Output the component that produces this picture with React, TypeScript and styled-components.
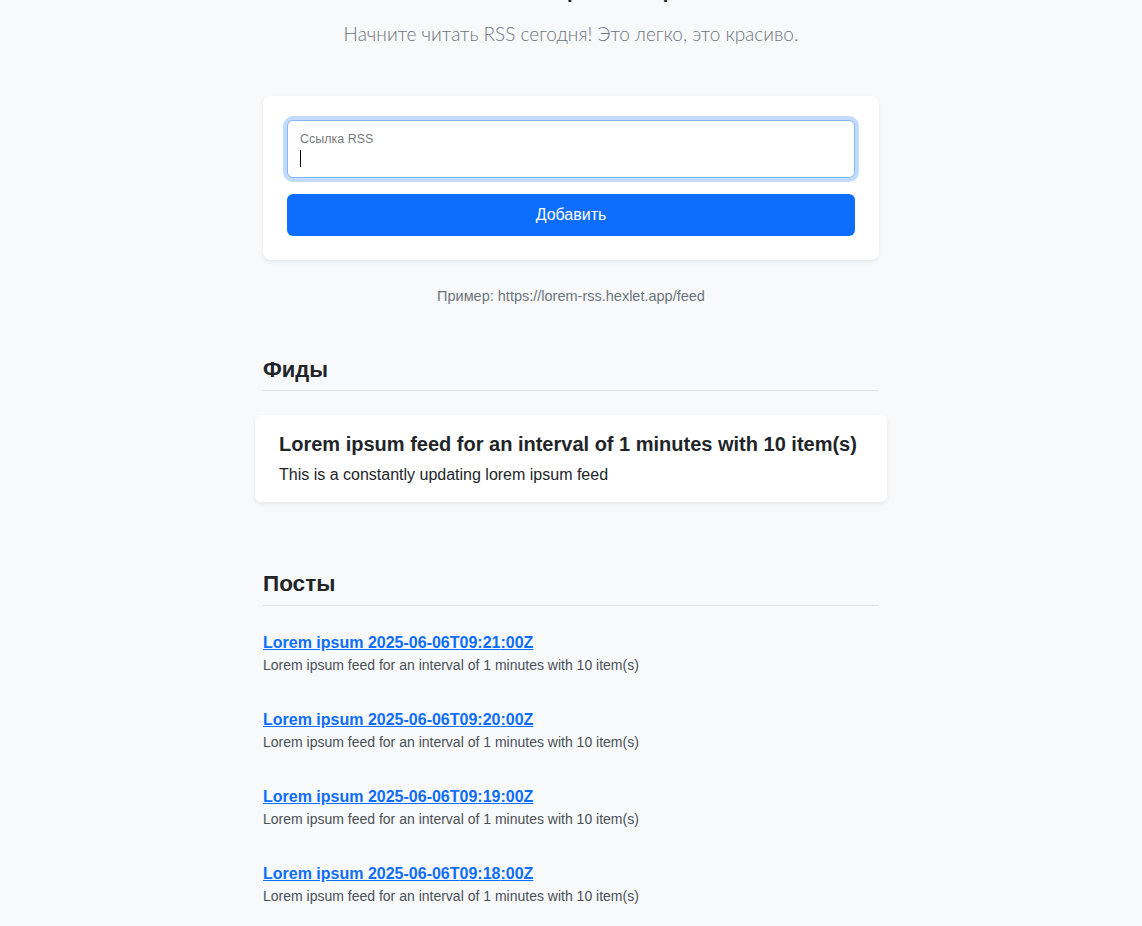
import React from "react";
import styled, { createGlobalStyle } from "styled-components";

const Global = createGlobalStyle`
  html, body { margin: 0; padding: 0; }
  body {
    background: #f8f9fa;
    color: #212529;
    font-family: "Segoe UI", "Liberation Sans", Arial, sans-serif;
    font-size: 16px;
    line-height: 1.5;
    overflow: hidden;
  }
  * { box-sizing: border-box; }
`;

const Page = styled.main`
  width: 616px;
  margin: 0 auto;
  display: flex;
  flex-direction: column;
`;

const Title = styled.h1`
  margin: -40px 0 11px;
  font-size: 32px;
  font-weight: 500;
  line-height: 48px;
  text-align: center;
`;

const Lead = styled.p`
  margin: 0;
  font-family: Lato, "Liberation Sans", sans-serif;
  font-size: 19px;
  font-weight: 300;
  line-height: 30px;
  color: #6c757d;
  text-align: center;
`;

const Card = styled.form`
  margin-top: 47px;
  background: #fff;
  border-radius: 8px;
  box-shadow: 0 2px 4px rgba(0, 0, 0, 0.075);
  padding: 24px;
  display: flex;
  flex-direction: column;
  gap: 16px;
`;

const Field = styled.div`
  position: relative;
  height: 58px;
  border: 1px solid #86b7fe;
  border-radius: 6px;
  background: #fff;
  box-shadow: 0 0 0 4px rgba(13, 110, 253, 0.25);
  padding: 8px 12px;
`;

const FieldLabel = styled.label`
  display: block;
  font-size: 12.5px;
  line-height: 20px;
  color: rgba(33, 37, 41, 0.65);
`;

const Caret = styled.span`
  display: block;
  width: 1px;
  height: 17px;
  margin-top: 1px;
  background: #000;
`;

const Button = styled.button`
  height: 42px;
  border: none;
  border-radius: 6px;
  background: #0d6efd;
  color: #fff;
  font-family: inherit;
  font-size: 16px;
  line-height: 24px;
  cursor: pointer;
`;

const Example = styled.p`
  margin: 26px 0 0;
  font-size: 14.5px;
  line-height: 21px;
  color: #6c757d;
  text-align: center;
`;

const SectionTitle = styled.h2<{ $size: number; $lh: number }>`
  margin: 0;
  font-size: ${(p) => p.$size}px;
  font-weight: 600;
  line-height: ${(p) => p.$lh}px;
  padding-bottom: 6px;
  border-bottom: 1px solid #dee2e6;
`;

const FeedsSection = styled.section`
  margin-top: 49px;
  display: flex;
  flex-direction: column;
`;

const FeedCard = styled.div`
  margin: 24px -8px 0;
  background: #fff;
  border-radius: 6px;
  box-shadow: 0 2px 4px rgba(0, 0, 0, 0.075);
  padding: 17px 24px 15px;
`;

const FeedTitle = styled.h3`
  margin: 0 0 7px;
  font-size: 20px;
  font-weight: 700;
  line-height: 24px;
`;

const FeedDesc = styled.p`
  margin: 0;
  font-size: 16px;
  line-height: 24px;
`;

const PostsSection = styled.section`
  margin-top: 66px;
  display: flex;
  flex-direction: column;
`;

const PostList = styled.ul`
  list-style: none;
  margin: 25px 0 0;
  padding: 0;
  display: flex;
  flex-direction: column;
  gap: 32px;
`;

const Post = styled.li`
  display: flex;
  flex-direction: column;
`;

const PostLink = styled.a`
  font-size: 16px;
  font-weight: 700;
  line-height: 24px;
  color: #0d6efd;
  text-decoration: underline;
`;

const PostDesc = styled.p`
  margin: 0;
  font-size: 14px;
  line-height: 21px;
  color: #495057;
`;

const posts = ["09:21", "09:20", "09:19", "09:18"];

export default function App() {
  return (
    <>
      <Global />
      <Page>
        <Title>RSS агрегатор</Title>
        <Lead>Начните читать RSS сегодня! Это легко, это красиво.</Lead>
        <Card onSubmit={(e) => e.preventDefault()}>
          <Field>
            <FieldLabel>Ссылка RSS</FieldLabel>
            <Caret />
          </Field>
          <Button type="submit">Добавить</Button>
        </Card>
        <Example>Пример: https://lorem-rss.hexlet.app/feed</Example>
        <FeedsSection>
          <SectionTitle $size={22} $lh={28}>Фиды</SectionTitle>
          <FeedCard>
            <FeedTitle>Lorem ipsum feed for an interval of 1 minutes with 10 item(s)</FeedTitle>
            <FeedDesc>This is a constantly updating lorem ipsum feed</FeedDesc>
          </FeedCard>
        </FeedsSection>
        <PostsSection>
          <SectionTitle $size={22.5} $lh={31}>Посты</SectionTitle>
          <PostList>
            {posts.map((t) => (
              <Post key={t}>
                <PostLink href="#">Lorem ipsum 2025-06-06T{t}:00Z</PostLink>
                <PostDesc>Lorem ipsum feed for an interval of 1 minutes with 10 item(s)</PostDesc>
              </Post>
            ))}
          </PostList>
        </PostsSection>
      </Page>
    </>
  );
}
